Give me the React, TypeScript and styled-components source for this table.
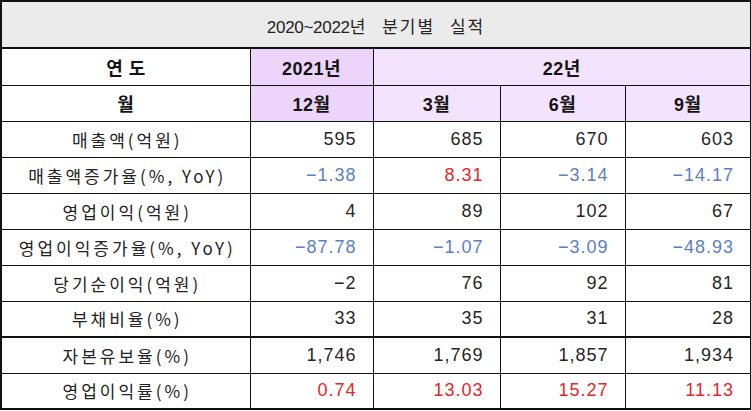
import React from "react";
import styled, { createGlobalStyle } from "styled-components";

const GlobalStyle = createGlobalStyle`
  html, body {
    margin: 0;
    padding: 0;
    background: #ffffff;
  }
  body {
    font-family: "Liberation Sans", "Noto Sans CJK KR", sans-serif;
  }
`;

type Tone = "plain" | "up" | "down";

const rows: { label: string; values: string[]; tone?: Tone[]; thick?: boolean }[] = [
  { label: "매출액(억원)", values: ["595", "685", "670", "603"] },
  {
    label: "매출액증가율(%, YoY)",
    values: ["−1.38", "8.31", "−3.14", "−14.17"],
    tone: ["down", "up", "down", "down"],
  },
  { label: "영업이익(억원)", values: ["4", "89", "102", "67"] },
  {
    label: "영업이익증가율(%, YoY)",
    values: ["−87.78", "−1.07", "−3.09", "−48.93"],
    tone: ["down", "down", "down", "down"],
  },
  { label: "당기순이익(억원)", values: ["−2", "76", "92", "81"] },
  { label: "부채비율(%)", values: ["33", "35", "31", "28"] },
  { label: "자본유보율(%)", values: ["1,746", "1,769", "1,857", "1,934"], thick: true },
  {
    label: "영업이익률(%)",
    values: ["0.74", "13.03", "15.27", "11.13"],
    tone: ["up", "up", "up", "up"],
  },
];

const App = () => {
  return (
    <>
      <GlobalStyle />
      <Table>
        <colgroup>
          <col style={{ width: 249 }} />
          <col style={{ width: 123 }} />
          <col style={{ width: 127 }} />
          <col style={{ width: 125 }} />
          <col style={{ width: 126 }} />
        </colgroup>
        <thead>
          <tr>
            <Title colSpan={5}>
              2020~2022<Hangul>년 분기별 실적</Hangul>
            </Title>
          </tr>
          <HeadRow $first>
            <HeadCell $tint="none" $wide>
              연도
            </HeadCell>
            <HeadCell $tint="strong">2021년</HeadCell>
            <HeadCell $tint="light" colSpan={3}>
              22년
            </HeadCell>
          </HeadRow>
          <HeadRow>
            <HeadCell $tint="none">월</HeadCell>
            <HeadCell $tint="strong">12월</HeadCell>
            <HeadCell $tint="light">3월</HeadCell>
            <HeadCell $tint="light">6월</HeadCell>
            <HeadCell $tint="light">9월</HeadCell>
          </HeadRow>
        </thead>
        <tbody>
          {rows.map((row) => (
            <BodyRow key={row.label} $thick={row.thick}>
              <Label>{row.label}</Label>
              {row.values.map((v, i) => (
                <Value key={i} $tone={row.tone ? row.tone[i] : "plain"}>
                  {v}
                </Value>
              ))}
            </BodyRow>
          ))}
        </tbody>
      </Table>
    </>
  );
};

export default App;

const Table = styled.table`
  width: 750px;
  border-collapse: collapse;
  table-layout: fixed;
  border: 2px solid #111;
  color: #1c1c1c;
`;

const Title = styled.th`
  height: 43px;
  padding: 2px 0 0 0;
  background: #ebebeb;
  border: 1px solid #111;
  border-bottom: 2px solid #111;
  font-size: 17px;
  font-weight: 400;
  letter-spacing: -0.3px;
  color: #222;
  text-align: center;
`;

const Hangul = styled.span`
  font-family: "Noto Sans CJK KR", sans-serif;
  font-size: 17px;
  letter-spacing: 2px;
  word-spacing: 9px;
`;

const HeadRow = styled.tr<{ $first?: boolean }>`
  height: ${(p) => (p.$first ? "37px" : "36px")};
`;

const HeadCell = styled.th<{ $tint: "none" | "strong" | "light"; $wide?: boolean }>`
  padding: 0;
  border: 1px solid #111;
  font-family: "Liberation Sans", "Noto Sans CJK KR", sans-serif;
  font-size: 18px;
  font-weight: 700;
  letter-spacing: ${(p) => (p.$wide ? "6px" : "0.5px")};
  text-indent: ${(p) => (p.$wide ? "6px" : "0")};
  text-align: center;
  color: #141414;
  background: ${(p) =>
    p.$tint === "strong" ? "#ecd4fa" : p.$tint === "light" ? "#f4e3fc" : "#ffffff"};
`;

const BodyRow = styled.tr<{ $thick?: boolean }>`
  height: 36px;
  td {
    border-top: ${(p) => (p.$thick ? "2px solid #111" : "1px solid #111")};
  }
`;

const Label = styled.td`
  padding: 0;
  border: 1px solid #111;
  text-align: center;
  font-family: "Noto Sans CJK KR", sans-serif;
  font-size: 17px;
  letter-spacing: 3px;
  text-indent: 3px;
  color: #222;
`;

const Value = styled.td<{ $tone: Tone }>`
  padding: 0 16px 0 0;
  border: 1px solid #111;
  text-align: right;
  font-family: "Liberation Sans", "Noto Sans CJK KR", sans-serif;
  font-size: 18px;
  letter-spacing: 1px;
  color: ${(p) =>
    p.$tone === "up" ? "#e2262c" : p.$tone === "down" ? "#5b80c4" : "#262626"};
`;
